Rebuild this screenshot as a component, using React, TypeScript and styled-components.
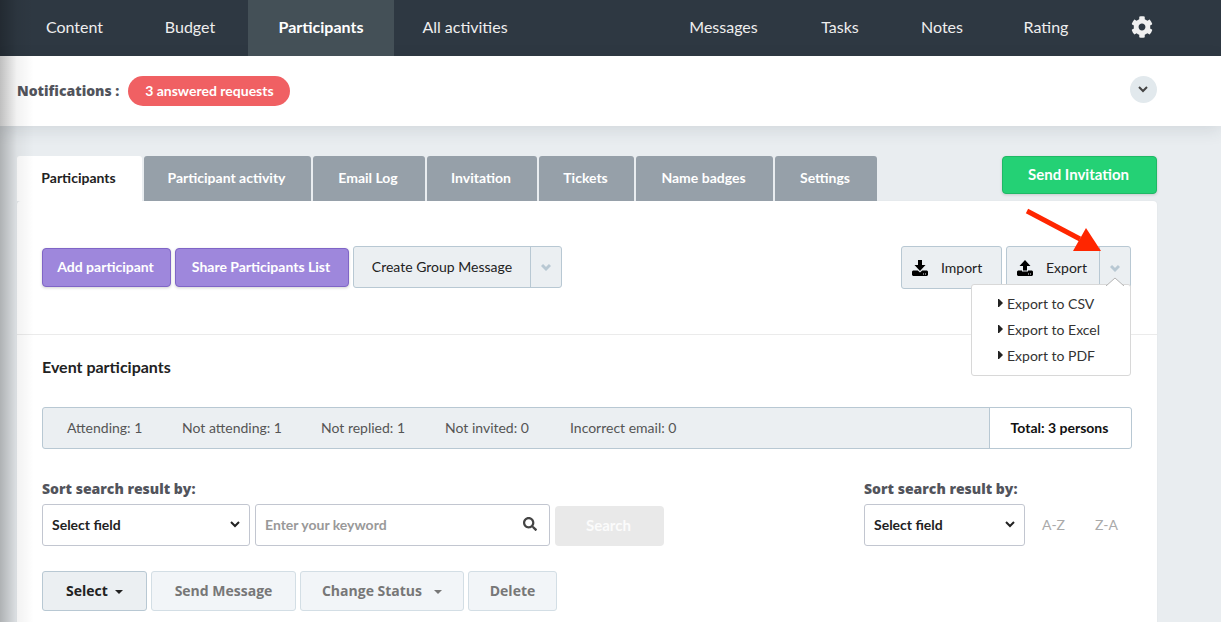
import React from 'react';
import styled, { createGlobalStyle, css } from 'styled-components';
import { FaSearch, FaCog } from 'react-icons/fa';

const Global = createGlobalStyle`
  *, *::before, *::after { box-sizing: border-box; }
  body { margin: 0; background: #e9edf0; font-family: Lato, "Liberation Sans", sans-serif; font-size: 14px; color: #222; }
  button, input, select { font-family: inherit; margin: 0; }
  a { color: inherit; text-decoration: none; }
`;

const Page = styled.div`
  position: relative;
  min-height: 100vh;
  overflow: hidden;
`;

const EdgeShade = styled.div`
  position: absolute;
  inset: 0 auto 0 0;
  width: 34px;
  z-index: 5;
  pointer-events: none;
  background: linear-gradient(to right, rgba(0, 0, 0, 0.25), rgba(0, 0, 0, 0.05) 50%, rgba(0, 0, 0, 0));
`;

const Nav = styled.nav`
  display: flex;
  justify-content: space-between;
  height: 56px;
  padding: 0 64px 0 17px;
  background: #2e3842;
`;

const NavGroup = styled.div`
  display: flex;
`;

const NavLink = styled.a<{ $w: number; $active?: boolean }>`
  display: flex;
  align-items: center;
  justify-content: center;
  width: ${p => p.$w}px;
  padding-bottom: 4px;
  font-size: 16px;
  color: #eee;
  ${p => p.$active && css`
    background: #445057;
    color: #fff;
    font-weight: 700;
  `}
`;

const GearButton = styled.button`
  display: flex;
  align-items: center;
  margin-left: 30px;
  padding: 0 4px 2px 2px;
  border: 0;
  background: none;
  color: #f0f0f0;
`;

const Notifications = styled.section`
  display: flex;
  align-items: flex-start;
  gap: 9px;
  padding: 20px 64px 20px 17px;
  background: #fff;
  box-shadow: 0 4px 16px rgba(40, 55, 70, 0.12);
`;

const labelText = css`
  font-family: "Open Sans", "Liberation Sans", sans-serif;
  font-size: 14px;
  font-weight: 800;
  color: #52545c;
`;

const Strong = styled.strong`
  ${labelText}
  line-height: 30px;
`;

const Pill = styled.a`
  display: flex;
  align-items: center;
  justify-content: center;
  width: 162px;
  height: 30px;
  padding-bottom: 2px;
  border-radius: 15px;
  background: #f06063;
  color: #fff;
  font-weight: 700;
`;

const RoundButton = styled.button`
  display: flex;
  align-items: center;
  justify-content: center;
  width: 27px;
  height: 27px;
  margin-left: auto;
  padding: 0 2px 2px 0;
  border: 0;
  border-radius: 50%;
  background: #e2e9ed;
  color: #444;
`;

const Main = styled.main`
  padding: 30px 64px 0 17px;
`;

const TabRow = styled.div`
  display: flex;
  justify-content: space-between;
  align-items: flex-start;
`;

const Tabs = styled.div`
  display: flex;
  gap: 2px;
`;

const Tab = styled.a<{ $w: number; $active?: boolean }>`
  display: flex;
  align-items: center;
  justify-content: center;
  width: ${p => p.$w}px;
  height: 45px;
  padding: 0 2px 2px 0;
  border-radius: 3px 3px 0 0;
  background: ${p => (p.$active ? '#fff' : '#96a0a9')};
  color: ${p => (p.$active ? '#222' : '#fff')};
  font-weight: 700;
`;

const SendInvitation = styled.button`
  width: 155px;
  height: 38px;
  padding: 0 2px 2px 0;
  border: 1px solid #1fb965;
  border-radius: 4px;
  background: #24d175;
  box-shadow: 0 1px 3px rgba(0, 0, 0, 0.15);
  color: #fff;
  font-size: 15px;
  font-weight: 700;
`;

const Panel = styled.section`
  min-height: 440px;
  border-radius: 4px 4px 0 0;
  background: #fff;
  box-shadow: 0 0 2px rgba(0, 0, 0, 0.06);
`;

const Toolbar = styled.div`
  display: flex;
  justify-content: space-between;
  align-items: flex-start;
  height: 134px;
  padding: 45px 26px 0 25px;
  border-bottom: 1px solid #ebebeb;
`;

const Group = styled.div`
  position: relative;
  display: flex;
  align-items: center;
  gap: 4px;
`;

const Purple = styled.button<{ $w: number }>`
  width: ${p => p.$w}px;
  height: 39px;
  padding: 0 2px 2px 0;
  border: 1px solid #7f65c6;
  border-radius: 4px;
  background: #9e87dc;
  box-shadow: 0 1px 3px rgba(0, 0, 0, 0.18);
  color: #fff;
  font-size: 14px;
  font-weight: 700;
`;

const Split = styled.div<{ $h: number }>`
  display: flex;
  height: ${p => p.$h}px;
  border: 1px solid #b8c8d3;
  border-radius: 3px;
  background: #ebeff2;
`;

const SplitMain = styled.button<{ $w: number; $icon?: boolean }>`
  display: flex;
  align-items: center;
  justify-content: ${p => (p.$icon ? 'flex-start' : 'center')};
  gap: 13px;
  width: ${p => p.$w}px;
  padding: ${p => (p.$icon ? '0 0 0 10px' : '0 0 2px')};
  border: 0;
  background: none;
  color: #222;
  font-size: 14px;
`;

const SplitToggle = styled.button`
  display: flex;
  align-items: center;
  justify-content: center;
  width: 31px;
  padding: 0;
  border: 0;
  border-left: 1px solid #b8c8d3;
  background: none;
  color: #b8c8d3;
`;

const Menu = styled.ul`
  position: absolute;
  top: 38px;
  right: 0;
  z-index: 2;
  width: 160px;
  height: 92px;
  margin: 0;
  padding: 5px 0 0 26px;
  list-style: none;
  border: 1px solid #d8d8d8;
  border-radius: 3px;
  background: #fff;
  color: #333;
`;

const MenuNotch = styled.svg`
  position: absolute;
  top: -9px;
  right: 5px;
`;

const MenuLink = styled.a`
  display: flex;
  align-items: center;
  gap: 4px;
  height: 26px;
  font-size: 14px;
`;

const Pointer = styled.svg`
  position: absolute;
  top: -38px;
  right: 29px;
  z-index: 3;
  pointer-events: none;
`;

const Body = styled.div`
  padding: 20px 25px 0;
`;

const Title = styled.h2`
  margin: 0;
  font-size: 16px;
  line-height: 24px;
  font-weight: 700;
`;

const Summary = styled.div`
  display: flex;
  height: 42px;
  margin-top: 28px;
  border: 1px solid #b8c8d3;
  border-radius: 3px;
  background: #ebeff2;
`;

const Counts = styled.div`
  display: flex;
  align-items: center;
  flex: 1;
  padding: 0 0 2px 24px;
  color: #555;
`;

const Count = styled.span<{ $w: number }>`
  width: ${p => p.$w}px;
`;

const Total = styled.div`
  display: flex;
  align-items: center;
  justify-content: center;
  width: 142px;
  padding: 0 2px 2px 0;
  border-left: 1px solid #b8c8d3;
  border-radius: 0 3px 3px 0;
  background: #fff;
  color: #111;
  font-weight: 700;
`;

const Filters = styled.div`
  display: flex;
  justify-content: space-between;
  margin-top: 30px;
`;

const Field = styled.div<{ $w?: number }>`
  width: ${p => (p.$w ? p.$w + 'px' : 'auto')};
`;

const Label = styled.label`
  ${labelText}
  display: block;
  height: 25px;
  line-height: 20px;
`;

const Row = styled.div<{ $gap: number }>`
  display: flex;
  align-items: flex-end;
  gap: ${p => p.$gap}px;
`;

const Control = styled.div<{ $w: number }>`
  position: relative;
  width: ${p => p.$w}px;
  height: 42px;
`;

const controlLook = css`
  width: 100%;
  height: 100%;
  padding: 0 9px 2px;
  border: 1px solid #c2c6d0;
  border-radius: 3px;
  background: #fff;
  color: #222;
  font-size: 14px;
  font-weight: 700;
`;

const Select = styled.select`
  ${controlLook}
  appearance: none;
`;

const Input = styled.input`
  ${controlLook}
  &::placeholder { color: #999; opacity: 1; }
`;

const ControlIcon = styled.span<{ $right: number }>`
  position: absolute;
  top: 0;
  right: ${p => p.$right}px;
  bottom: 0;
  display: flex;
  align-items: center;
  padding-bottom: 2px;
  pointer-events: none;
`;

const SearchButton = styled.button`
  width: 109px;
  height: 40px;
  padding: 0 2px 2px 0;
  border: 0;
  border-radius: 4px;
  background: #e9e9e9;
  color: #fbfbfb;
  font-size: 15px;
  font-weight: 700;
`;

const SortLink = styled.button`
  width: 53px;
  height: 42px;
  padding: 0 0 2px 4px;
  border: 0;
  background: none;
  color: #aaa;
  font-size: 14px;
`;

const Actions = styled.div`
  display: flex;
  gap: 4px;
  margin-top: 25px;
`;

const Action = styled.button<{ $w: number; $gap?: number; $active?: boolean }>`
  display: flex;
  align-items: center;
  justify-content: center;
  gap: ${p => p.$gap}px;
  width: ${p => p.$w}px;
  height: 40px;
  padding: 0 0 2px;
  border: 1px solid ${p => (p.$active ? '#b8c8d3' : '#d3dee5')};
  border-radius: 3px;
  background: ${p => (p.$active ? '#ebeff2' : '#f2f5f8')};
  color: ${p => (p.$active ? '#222' : '#777')};
  font-family: "Open Sans", "Liberation Sans", sans-serif;
  font-size: 14px;
  font-weight: 700;

  svg { margin-top: 4px; }
`;

const Chevron = ({ weight = 2 }: { weight?: number }) => (
  <svg width="10" height="10" viewBox="0 0 10 10" fill="none" stroke="currentColor" strokeWidth={weight} aria-hidden>
    <path d="M1 3l4 4 4-4" />
  </svg>
);

const Caret = () => (
  <svg width="8" height="4" viewBox="0 0 8 4" fill="currentColor" aria-hidden><path d="M0 0h8L4 4z" /></svg>
);

const TrayIcon = ({ up }: { up?: boolean }) => (
  <svg width="16" height="16" viewBox="0 0 16 16" fill="#000" aria-hidden>
    {up ? (
      <>
        <path d="M8 0l5.500 6H10v4.500H6V6H2.500z" />
        <path fillRule="evenodd" d="M1 10.500h4v1h6v-1h4l1 1V15l-1 1H1l-1-1v-3.500zM11 13.500v1h1v-1zM13 13.500v1h1v-1z" />
      </>
    ) : (
      <>
        <path d="M6 0h4v5h3.500L8 11 2.500 5H6z" />
        <path fillRule="evenodd" d="M1 10.500h4.800L8 12.500l2.200-2H15l1 1V15l-1 1H1l-1-1v-3.500zM11 13.500v1h1v-1zM13 13.500v1h1v-1z" />
      </>
    )}
  </svg>
);

const tabs: [string, number][] = [
  ['Participants', 125], ['Participant activity', 167], ['Email Log', 112], ['Invitation', 110],
  ['Tickets', 95], ['Name badges', 137], ['Settings', 102],
];

const counts: [string, number][] = [
  ['Attending: 1', 115], ['Not attending: 1', 139], ['Not replied: 1', 124], ['Not invited: 0', 125], ['Incorrect email: 0', 120],
];

export default function App() {
  return (
    <Page>
      <Global />
      <Nav>
        <NavGroup>
          <NavLink href="#" $w={115}>Content</NavLink>
          <NavLink href="#" $w={116}>Budget</NavLink>
          <NavLink href="#" $w={146} $active>Participants</NavLink>
          <NavLink href="#" $w={142}>All activities</NavLink>
        </NavGroup>
        <NavGroup>
          <NavLink href="#" $w={131}>Messages</NavLink>
          <NavLink href="#" $w={102}>Tasks</NavLink>
          <NavLink href="#" $w={102}>Notes</NavLink>
          <NavLink href="#" $w={106}>Rating</NavLink>
          <GearButton aria-label="Settings"><FaCog size={22} /></GearButton>
        </NavGroup>
      </Nav>
      <Notifications>
        <Strong>Notifications :</Strong>
        <Pill href="#">3 answered requests</Pill>
        <RoundButton aria-label="Expand notifications"><Chevron /></RoundButton>
      </Notifications>
      <Main>
        <TabRow>
          <Tabs>
            {tabs.map(([name, w], i) => <Tab key={name} href="#" $w={w} $active={i === 0}>{name}</Tab>)}
          </Tabs>
          <SendInvitation>Send Invitation</SendInvitation>
        </TabRow>
        <Panel>
          <Toolbar>
            <Group>
              <Purple $w={129}>Add participant</Purple>
              <Purple $w={174}>Share Participants List</Purple>
              <Split $h={42}>
                <SplitMain $w={176}>Create Group Message</SplitMain>
                <SplitToggle aria-label="Group message options"><Chevron weight={3} /></SplitToggle>
              </Split>
            </Group>
            <Group>
              <Split $h={43}>
                <SplitMain $w={99} $icon><TrayIcon />Import</SplitMain>
              </Split>
              <Split $h={43}>
                <SplitMain $w={92} $icon><TrayIcon up />Export</SplitMain>
                <SplitToggle aria-label="Export options"><Chevron weight={3} /></SplitToggle>
              </Split>
              <Menu>
                <MenuNotch width="20" height="10" viewBox="0 0 20 10" aria-hidden>
                  <path d="M1 10l9-8 9 8" fill="#fff" stroke="#b4b4b4" />
                </MenuNotch>
                {['Export to CSV', 'Export to Excel', 'Export to PDF'].map(t => (
                  <li key={t}>
                    <MenuLink href="#">
                      <svg width="5" height="8" viewBox="0 0 5 8" aria-hidden><path d="M0 0h1l4 4-4 4H0z" fill="#222" /></svg>
                      {t}
                    </MenuLink>
                  </li>
                ))}
              </Menu>
              <Pointer width="78" height="46" viewBox="0 0 78 46" aria-hidden>
                <path d="M3 3L56 31" stroke="#ff2600" strokeWidth="5" />
                <path d="M62 20L77 43H49z" fill="#ff2600" />
              </Pointer>
            </Group>
          </Toolbar>
          <Body>
            <Title>Event participants</Title>
            <Summary>
              <Counts>{counts.map(([t, w]) => <Count key={t} $w={w}>{t}</Count>)}</Counts>
              <Total>Total: 3 persons</Total>
            </Summary>
            <Filters>
              <Field>
                <Label htmlFor="field">Sort search result by:</Label>
                <Row $gap={5}>
                  <Control $w={208}>
                    <Select id="field"><option>Select field</option></Select>
                    <ControlIcon $right={10}><Chevron /></ControlIcon>
                  </Control>
                  <Control $w={295}>
                    <Input aria-label="Keyword" placeholder="Enter your keyword" />
                    <ControlIcon $right={13}><FaSearch size={14} color="#444" /></ControlIcon>
                  </Control>
                  <SearchButton disabled>Search</SearchButton>
                </Row>
              </Field>
              <Field $w={268}>
                <Label htmlFor="order">Sort search result by:</Label>
                <Row $gap={0}>
                  <Control $w={161}>
                    <Select id="order"><option>Select field</option></Select>
                    <ControlIcon $right={10}><Chevron /></ControlIcon>
                  </Control>
                  <SortLink>A-Z</SortLink>
                  <SortLink>Z-A</SortLink>
                </Row>
              </Field>
            </Filters>
            <Actions>
              <Action $w={105} $gap={7} $active>Select<Caret /></Action>
              <Action $w={145}>Send Message</Action>
              <Action $w={164} $gap={12}>Change Status<Caret /></Action>
              <Action $w={89}>Delete</Action>
            </Actions>
          </Body>
        </Panel>
      </Main>
      <EdgeShade />
    </Page>
  );
}
